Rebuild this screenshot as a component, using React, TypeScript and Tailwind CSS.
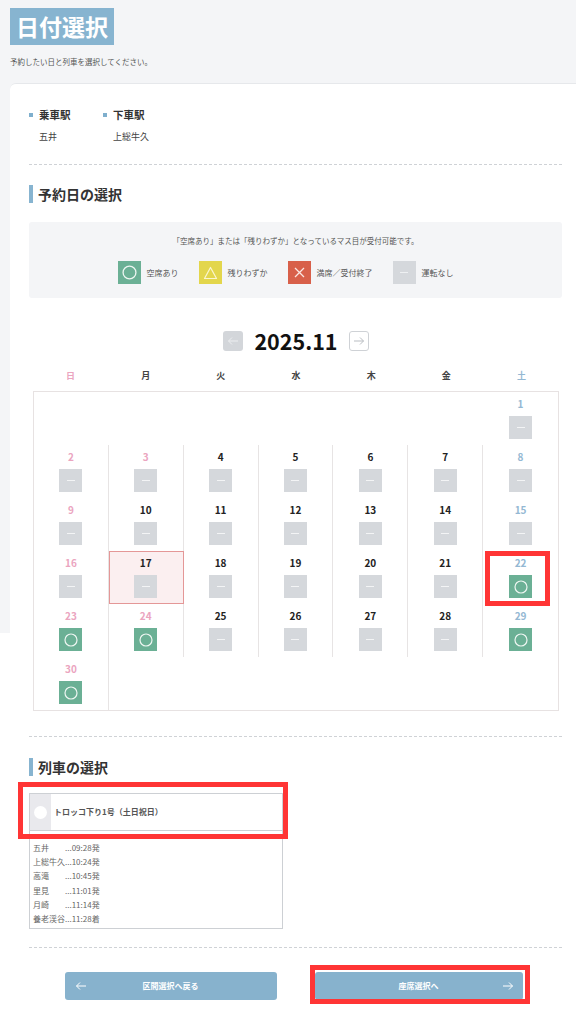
import React from "react"

const HOLIDAYS = [3, 24]
const OPEN = [22, 23, 24, 29, 30]

const weeks: (number | null)[][] = [
  [null, null, null, null, null, null, 1],
  [2, 3, 4, 5, 6, 7, 8],
  [9, 10, 11, 12, 13, 14, 15],
  [16, 17, 18, 19, 20, 21, 22],
  [23, 24, 25, 26, 27, 28, 29],
  [30, null, null, null, null, null, null],
]

const WEEKDAYS = ["日", "月", "火", "水", "木", "金", "土"]

const TIMES = [
  ["五井", "...09:28発"],
  ["上総牛久", "...10:24発"],
  ["高滝", "...10:45発"],
  ["里見", "...11:01発"],
  ["月崎", "...11:14発"],
  ["養老渓谷", "...11:28着"],
]

function Circle({ size }: { size: number }) {
  return (
    <svg width={size} height={size} viewBox="0 0 14 14">
      <circle cx="7" cy="7" r="6" fill="none" stroke="#eef6f2" strokeWidth="1.2" />
    </svg>
  )
}

function StatusBox({ open }: { open: boolean }) {
  if (open) {
    return (
      <div className="w-[23px] h-[23px] bg-[#6bb095] flex items-center justify-center">
        <Circle size={14} />
      </div>
    )
  }
  return (
    <div className="w-[23px] h-[23px] bg-[#d5d8dc] flex items-center justify-center">
      <div className="w-[8px] h-[1px] bg-[#f3f4f5]" />
    </div>
  )
}

function DayCell({ d, col }: { d: number | null; col: number }) {
  if (d === null) return <div className="h-[53px]" />
  const color =
    col === 0 || HOLIDAYS.includes(d)
      ? "text-[#eba5bf]"
      : col === 6
        ? "text-[#94b8d3]"
        : "text-[#222]"
  const highlight = d === 17
  return (
    <div
      className={`relative h-[53px] flex flex-col items-center pt-[6px] ${col < 6 ? "border-r border-[#e7e4e4]" : ""} ${highlight ? "bg-[#fbeff0] outline outline-1 -outline-offset-1 outline-[#e49797]" : ""}`}
    >
      <span className={`text-[10px] font-bold leading-[12px] ${color}`}>{d}</span>
      <div className="mt-[6px]">
        <StatusBox open={OPEN.includes(d)} />
      </div>
      {d === 22 && (
        <div className="absolute left-[2px] top-0 w-[65px] h-[55px] border-[5px] border-[#ff3535] z-10" />
      )}
    </div>
  )
}

function SectionHeading({ children }: { children: React.ReactNode }) {
  return (
    <h2 className="flex items-center h-[20px]">
      <span className="w-[4px] h-[18px] bg-[#87b4d0]" />
      <span className="ml-[5px] text-[14px] font-bold leading-[20px] text-[#333]">{children}</span>
    </h2>
  )
}

function Divider() {
  return <div className="border-t border-dashed border-[#cfd2d6]" />
}

function Station({ label, value }: { label: string; value: string }) {
  return (
    <div className="w-[74px]">
      <div className="flex items-center h-[14px]">
        <span className="w-[4px] h-[4px] bg-[#7fafcd]" />
        <span className="ml-[6px] text-[10.5px] font-bold text-[#333] leading-[14px]">{label}</span>
      </div>
      <div className="mt-[9px] pl-[10px] text-[9px] leading-[12px] text-[#444]">{value}</div>
    </div>
  )
}

function LegendItem({ bg, icon, label }: { bg: string; icon: React.ReactNode; label: string }) {
  return (
    <div className="flex items-center gap-[6px]">
      <div className={`w-[23px] h-[23px] flex items-center justify-center ${bg}`}>{icon}</div>
      <span className="text-[8px] text-[#555]">{label}</span>
    </div>
  )
}

export default function App() {
  return (
    <div className="min-h-[1024px] bg-[linear-gradient(to_bottom,#f4f5f7_633px,#ffffff_633px)] font-['Noto_Sans_CJK_JP','Noto_Sans',sans-serif] pb-[20px]">
      <header className="pl-[10px] pt-[8px]">
        <h1 className="inline-block bg-[#87b4d0] text-white text-[23px] font-bold leading-[37px] px-[6px]">
          日付選択
        </h1>
        <p className="mt-[11px] text-[7.5px] leading-[12px] text-[#555]">
          予約したい日と列車を選択してください。
        </p>
      </header>

      <main className="ml-[10px] mt-[15px] bg-white rounded-tl-[6px] border-t border-[#e6e8eb] pl-[19px] pr-[14px] pt-[24px]">
        <div className="flex">
          <Station label="乗車駅" value="五井" />
          <Station label="下車駅" value="上総牛久" />
        </div>

        <div className="mt-[21px]">
          <Divider />
        </div>

        <div className="mt-[19px]">
          <SectionHeading>予約日の選択</SectionHeading>
        </div>

        <div className="mt-[18px] bg-[#f4f5f7] rounded-[3px] pt-[14px] pb-[14px]">
          <p className="text-center text-[7.5px] leading-[10px] text-[#555]">
            「空席あり」または「残りわずか」となっているマス目が受付可能です。
          </p>
          <div className="mt-[15px] flex justify-center gap-[20px] pr-[20px]">
            <LegendItem bg="bg-[#6bb095]" icon={<Circle size={15} />} label="空席あり" />
            <LegendItem
              bg="bg-[#e3d64c]"
              icon={
                <svg width="15" height="14" viewBox="0 0 15 14">
                  <path d="M7.5 1.5 L13.5 12.5 L1.5 12.5 Z" fill="none" stroke="#fbf6d0" strokeWidth="1.2" strokeLinejoin="round" />
                </svg>
              }
              label="残りわずか"
            />
            <LegendItem
              bg="bg-[#d8604a]"
              icon={
                <svg width="13" height="13" viewBox="0 0 13 13">
                  <path d="M2 2 L11 11 M11 2 L2 11" stroke="#fbe7e3" strokeWidth="1.3" />
                </svg>
              }
              label="満席／受付終了"
            />
            <LegendItem
              bg="bg-[#d5d8dc]"
              icon={<div className="w-[8px] h-[1px] bg-[#eef0f2]" />}
              label="運転なし"
            />
          </div>
        </div>

        <div className="ml-[4px] w-[526px]">
          <div className="mt-[32px] h-[22px] flex items-center justify-center gap-[11px]">
            <button className="w-[20px] h-[20px] rounded-[3px] bg-[#d3d6da] flex items-center justify-center">
              <svg width="12" height="10" viewBox="0 0 12 10">
                <path d="M11 5 H1.5 M5 1.5 L1.5 5 L5 8.5" fill="none" stroke="#eceef0" strokeWidth="1" />
              </svg>
            </button>
            <span className="text-[21.5px] font-bold leading-[22px] text-[#111]">2025.11</span>
            <button className="w-[20px] h-[20px] rounded-[3px] bg-white border border-[#cfd2d6] flex items-center justify-center">
              <svg width="12" height="10" viewBox="0 0 12 10">
                <path d="M1 5 H10.5 M7 1.5 L10.5 5 L7 8.5" fill="none" stroke="#b9bdc2" strokeWidth="1" />
              </svg>
            </button>
          </div>

          <div className="mt-[18px] grid grid-cols-7">
            {WEEKDAYS.map((w, i) => (
              <span
                key={w}
                className={`text-center text-[9px] font-bold leading-[12px] ${i === 0 ? "text-[#eba5bf]" : i === 6 ? "text-[#94b8d3]" : "text-[#444]"}`}
              >
                {w}
              </span>
            ))}
          </div>

          <div className="mt-[9px] border border-[#e7e2e2] grid grid-cols-7">
            {weeks.map((week, r) =>
              week.map((d, c) => <DayCell key={`${r}-${c}`} d={d} col={c} />),
            )}
          </div>
        </div>

        <div className="mt-[25px]">
          <Divider />
        </div>

        <div className="mt-[20px]">
          <SectionHeading>列車の選択</SectionHeading>
        </div>

        <div className="mt-[16px] w-[254px]">
          <div className="relative h-[38px] border border-[#cdd0d4] flex items-stretch">
            <div className="w-[21px] bg-[#e9e9ed] flex items-center justify-center">
              <span className="w-[13px] h-[13px] rounded-full bg-white" />
            </div>
            <span className="ml-[3px] self-center text-[8px] font-bold text-[#555]">
              トロッコ下り1号（土日祝日）
            </span>
            <div className="absolute left-[-12px] top-[-12px] w-[270px] h-[57px] border-[5px] border-[#ff3535]" />
          </div>
          <div className="border border-t-0 border-[#cdd0d4] pt-[10px] pb-[2px] pl-[3px]">
            {TIMES.map(([name, time]) => (
              <div key={name} className="flex text-[8px] leading-[14.2px] text-[#666]">
                <span className="w-[32px]">{name}</span>
                <span>{time}</span>
              </div>
            ))}
          </div>
        </div>

        <div className="mt-[18px]">
          <Divider />
        </div>

        <div className="mt-[24px] flex justify-center gap-[38px] pr-[4px]">
          <button className="relative w-[212px] h-[28px] rounded-[3px] bg-[#87b2cd] flex items-center justify-center text-white">
            <svg className="absolute left-[10px]" width="12" height="10" viewBox="0 0 12 10">
              <path d="M11 5 H1.5 M5 1.5 L1.5 5 L5 8.5" fill="none" stroke="#ffffff" strokeWidth="1" />
            </svg>
            <span className="text-[8px] font-bold">区間選択へ戻る</span>
          </button>
          <button className="relative w-[208px] h-[28px] rounded-[3px] bg-[#87b2cd] flex items-center justify-center text-white">
            <span className="text-[8px] font-bold">座席選択へ</span>
            <svg className="absolute right-[9px]" width="12" height="10" viewBox="0 0 12 10">
              <path d="M1 5 H10.5 M7 1.5 L10.5 5 L7 8.5" fill="none" stroke="#ffffff" strokeWidth="1" />
            </svg>
            <div className="absolute left-[-5px] top-[-7px] w-[220px] h-[39px] border-[5px] border-[#ff3535]" />
          </button>
        </div>
      </main>
    </div>
  )
}
